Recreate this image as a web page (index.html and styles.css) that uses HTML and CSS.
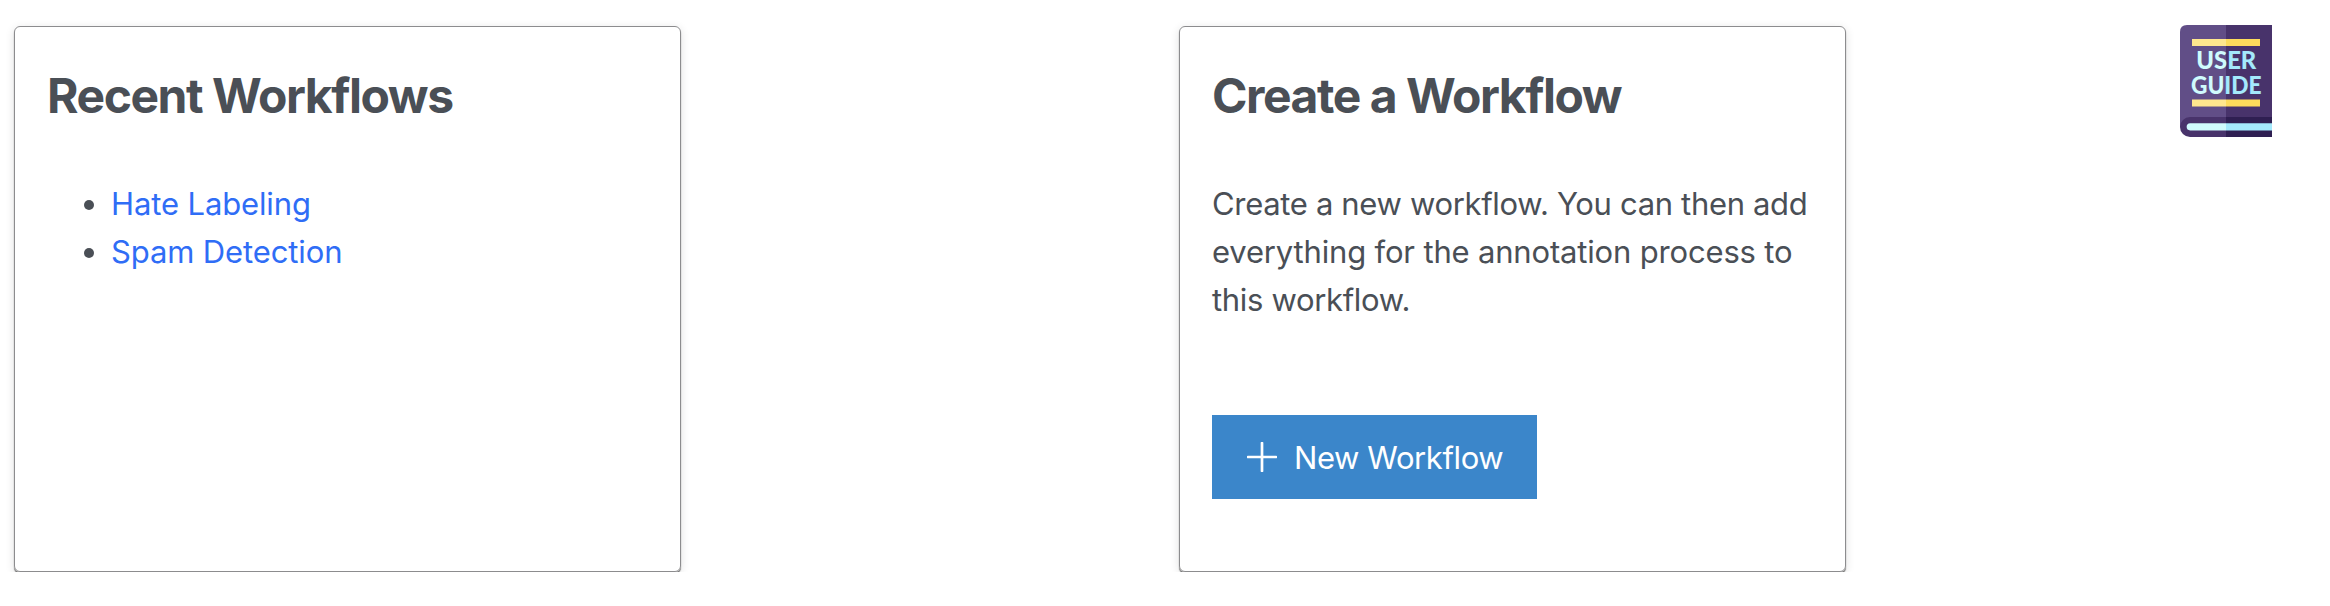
FILE: index.html
```html
<!DOCTYPE html>
<html lang="en">
<head>
<meta charset="utf-8">
<title>Workflows</title>
<link rel="stylesheet" href="styles.css">
</head>
<body>
<main class="board">
  <section class="card">
    <h2 class="card-title">Recent Workflows</h2>
    <ul class="workflow-list">
      <li><a href="#">Hate Labeling</a></li>
      <li><a href="#">Spam Detection</a></li>
    </ul>
  </section>
  <div class="column">
    <section class="card">
      <h2 class="card-title">Create a Workflow</h2>
      <p class="card-text">Create a new workflow. You can then add<br><span class="wide-line">everything for the annotation process to</span><br>this workflow.</p>
      <button class="new-button" type="button">
        <svg class="plus" viewBox="0 0 30 30"><path d="M1 15H29M15 1V29"/></svg>
        <span class="button-label">New Workflow</span>
      </button>
    </section>
    <a class="guide" href="#" aria-label="User guide">
      <svg width="92" height="112" viewBox="0 0 92 112">
        <defs>
          <linearGradient id="letters" gradientUnits="userSpaceOnUse" x1="0" y1="0" x2="92" y2="0">
            <stop offset=".5" stop-color="#d0fbfd"/><stop offset=".5" stop-color="#a4e9fc"/>
          </linearGradient>
        </defs>
        <path fill="#614e87" d="M7 0H46V102H0V7Q0 0 7 0Z"/>
        <path fill="#48336b" d="M46 0H92V112H46Z"/>
        <path fill="#48336b" d="M10 92H46V112H10A10 10 0 0 1 10 92Z"/>
        <path fill="#2f1f52" d="M46 92H92V112H46Z"/>
        <path fill="#d0fbfd" d="M10.2 98.3H46V105.4H10.2A3.55 3.55 0 0 1 10.2 98.3Z"/>
        <path fill="#a4e9fc" d="M46 98.3H92V105.4H46Z"/>
        <path fill="#ffe78e" d="M12 14H46V21H12ZM12 74.5H46V81.5H12Z"/>
        <path fill="#fddb5c" d="M46 14H80V21H46ZM46 74.5H80V81.5H46Z"/>
        <g class="guide-text" fill="url(#letters)">
          <text x="16.3" y="44.2" textLength="60" lengthAdjust="spacingAndGlyphs">USER</text>
          <text x="11" y="68.6" textLength="70.5" lengthAdjust="spacingAndGlyphs">GUIDE</text>
        </g>
      </svg>
    </a>
  </div>
</main>
</body>
</html>
```
FILE: styles.css
```css
* { box-sizing: border-box; }
body {
  margin: 0;
  background: #fff;
  color: #4a4f56;
  font: 400 31px/48px Inter, "Liberation Sans", sans-serif;
}
.board {
  display: grid;
  grid-template-columns: 1165px 1fr;
  padding: 26px 0 0 14px;
}
.column {
  display: flex;
  justify-content: space-between;
  align-items: flex-start;
  padding-right: 58px;
}
.card {
  width: 667px;
  height: 546px;
  padding: 34px 32px 0;
  border: 1px solid #8c8c8e;
  border-radius: 6px;
  box-shadow: 0 2px 1px rgba(0, 0, 0, .5), 0 2px 10px rgba(0, 0, 0, .12);
}
.card-title {
  margin: 0 0 49px;
  font-size: 48px;
  line-height: 70px;
  font-weight: 700;
  letter-spacing: -1.45px;
  white-space: nowrap;
}
.workflow-list { margin: 0; padding-left: 64px; letter-spacing: -.12px; }
.workflow-list a { color: #2f6df6; text-decoration: none; }
.card-text { margin: 0; white-space: nowrap; letter-spacing: -.33px; }
.wide-line { letter-spacing: -.17px; }
.new-button {
  display: flex;
  align-items: center;
  gap: 17px;
  width: 325px;
  height: 84px;
  margin-top: 91px;
  padding: 0 0 0 35px;
  border: 0;
  background: #3b86ca;
  color: #fff;
  font: inherit;
  letter-spacing: -.4px;
  white-space: nowrap;
}
.button-label { padding-top: 1px; }
.plus { width: 30px; height: 30px; fill: none; stroke: #fff; stroke-width: 2.7; stroke-linecap: round; }
.guide { display: block; height: 112px; margin-top: -1px; }
.guide svg { display: block; }
.guide-text { font: 900 25px/1 Lato, sans-serif; }
```
